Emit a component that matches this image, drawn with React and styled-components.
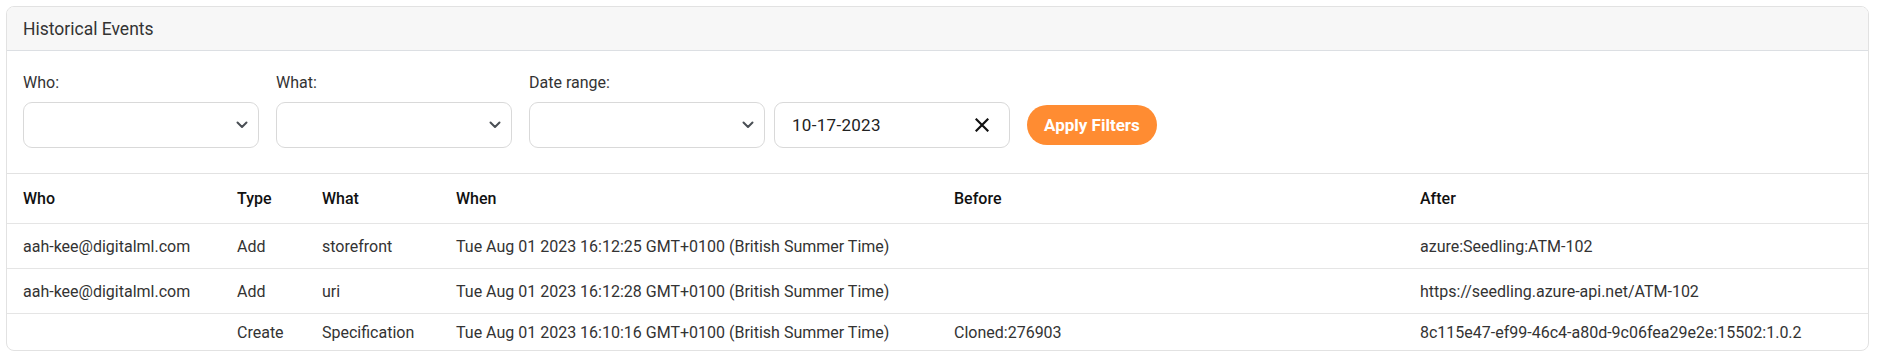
import styled, { createGlobalStyle } from "styled-components"

const GlobalStyle = createGlobalStyle`
    body {
        margin: 0;
        background: #ffffff;
        font-family: Roboto, "Liberation Sans", Arial, sans-serif;
        color: #333333;
    }
`

const Card = styled.div`
    margin: 6px 0 0 6px;
    width: 1863px;
    box-sizing: border-box;
    border: 1px solid #e2e2e2;
    border-radius: 8px;
    overflow: hidden;
    background: #ffffff;
`
const CardHeader = styled.div`
    height: 43px;
    display: flex;
    align-items: center;
    padding: 0 16px;
    background: #f7f7f7;
    border-bottom: 1px solid #dcdfe3;
    font-size: 17.5px;
    color: #333333;
`
const Filters = styled.div`
    display: flex;
    align-items: flex-end;
    gap: 17px;
    padding: 22px 16px 25px;
    border-bottom: 1px solid #e2e2e2;
`
const Field = styled.div`
    display: flex;
    flex-direction: column;
    gap: 10px;
`
const Label = styled.label`
    font-size: 16px;
    line-height: 19px;
    color: #333333;
`
const Controls = styled.div`
    display: flex;
    gap: 9px;
`
const Box = styled.div`
    width: 236px;
    height: 46px;
    box-sizing: border-box;
    border: 1px solid #d9d9d9;
    border-radius: 9px;
    display: flex;
    align-items: center;
    justify-content: space-between;
    padding: 0 ${(p) => (p.$date ? "20px" : "10px")} 0 17px;
    background: #ffffff;
    font-size: 17px;
    letter-spacing: 0.3px;
    color: #222222;
`
const ClearButton = styled.button`
    border: none;
    background: none;
    padding: 0;
    display: flex;
    cursor: pointer;
`
const Button = styled.button`
    height: 40px;
    padding: 0 17px;
    margin-bottom: 3px;
    border: none;
    border-radius: 20px;
    background: #ff8c32;
    color: #ffffff;
    font-family: Roboto, "Liberation Sans", Arial, sans-serif;
    font-size: 17px;
    font-weight: 700;
    cursor: pointer;
`
const Table = styled.table`
    width: 100%;
    border-collapse: collapse;
    table-layout: fixed;
    font-size: 16px;
`
const Th = styled.th`
    text-align: left;
    font-weight: 500;
    color: #111111;
    height: 49px;
    padding: 0 16px;
    border-bottom: 1px solid #e5e5e5;
`
const Td = styled.td`
    height: 44px;
    padding: 0 16px;
    color: #333333;
    white-space: nowrap;
    border-bottom: 1px solid #e5e5e5;
    tr:last-child & {
        border-bottom: none;
        height: 36px;
    }
`

const Chevron = () => (
    <svg width="12" height="8" viewBox="0 0 12 8">
        <path d="M1.5 1.5 6 6l4.5-4.5" fill="none" stroke="#4a4f55" strokeWidth="2" strokeLinecap="round" strokeLinejoin="round" />
    </svg>
)

const Cross = () => (
    <svg width="14" height="14" viewBox="0 0 14 14">
        <path d="M1.5 1.5l11 11M12.5 1.5l-11 11" stroke="#111111" strokeWidth="2.2" strokeLinecap="square" />
    </svg>
)

const Select = () => (
    <Box>
        <span />
        <Chevron />
    </Box>
)

const rows = [
    { who: "aah-kee@digitalml.com", type: "Add", what: "storefront", when: "Tue Aug 01 2023 16:12:25 GMT+0100 (British Summer Time)", before: "", after: "azure:Seedling:ATM-102" },
    { who: "aah-kee@digitalml.com", type: "Add", what: "uri", when: "Tue Aug 01 2023 16:12:28 GMT+0100 (British Summer Time)", before: "", after: "https://seedling.azure-api.net/ATM-102" },
    { who: "", type: "Create", what: "Specification", when: "Tue Aug 01 2023 16:10:16 GMT+0100 (British Summer Time)", before: "Cloned:276903", after: "8c115e47-ef99-46c4-a80d-9c06fea29e2e:15502:1.0.2" },
]

const App = () => {
  return (
    <>
        <GlobalStyle />
        <Card>
            <CardHeader>Historical Events</CardHeader>
            <Filters>
                <Field>
                    <Label>Who:</Label>
                    <Select />
                </Field>
                <Field>
                    <Label>What:</Label>
                    <Select />
                </Field>
                <Field>
                    <Label>Date range:</Label>
                    <Controls>
                        <Select />
                        <Box $date>
                            <span>10-17-2023</span>
                            <ClearButton><Cross /></ClearButton>
                        </Box>
                    </Controls>
                </Field>
                <Button>Apply Filters</Button>
            </Filters>
            <Table>
                <colgroup>
                    <col style={{ width: 214 }} />
                    <col style={{ width: 85 }} />
                    <col style={{ width: 134 }} />
                    <col style={{ width: 498 }} />
                    <col style={{ width: 466 }} />
                    <col />
                </colgroup>
                <thead>
                    <tr>
                        <Th>Who</Th>
                        <Th>Type</Th>
                        <Th>What</Th>
                        <Th>When</Th>
                        <Th>Before</Th>
                        <Th>After</Th>
                    </tr>
                </thead>
                <tbody>
                    {rows.map((r, i) => (
                        <tr key={i}>
                            <Td>{r.who}</Td>
                            <Td>{r.type}</Td>
                            <Td>{r.what}</Td>
                            <Td>{r.when}</Td>
                            <Td>{r.before}</Td>
                            <Td>{r.after}</Td>
                        </tr>
                    ))}
                </tbody>
            </Table>
        </Card>
    </>
  )
}

export default App
